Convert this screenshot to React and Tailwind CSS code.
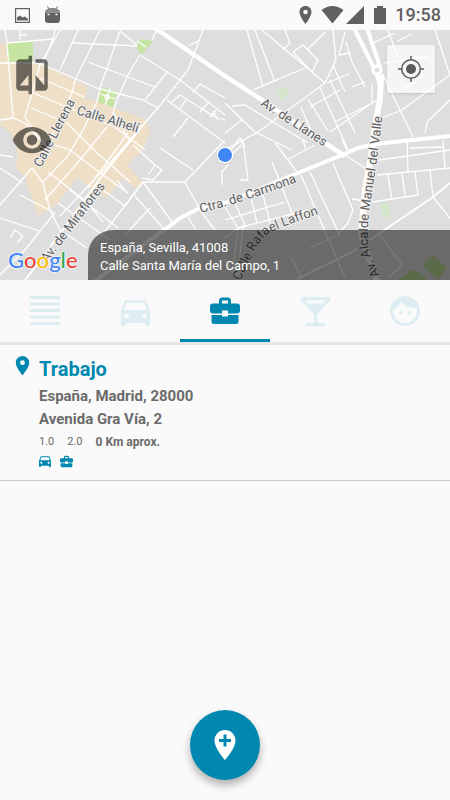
import {
  MdAddLocation,
  MdCompare,
  MdDirectionsCar,
  MdFace,
  MdLocalBar,
  MdPlace,
  MdVisibility,
} from "react-icons/md";

const MINOR_ROADS = [
  "M5 30L7 43L13 118L0 120M7 43L53 39M20 30V40M20 35H27M0 63H33",
  "M60 30L40 65L25 117L40 140M55 30L53 39L43 63M78 30L60 70M100 30L75 80L72 93L47 146",
  "M120 31L100 88L97 102M73 43L137 46M120 31L137 45M157 30L152 40M137 41L146 47",
  "M140 55L128 75L117 100L110 122M140 55L180 80L225 115M88 62L155 87",
  "M33 62L48 67L97 88L143 100L158 108M167 72L145 100M203 30L188 70L158 108L107 166L60 216",
  "M200 40L188 46M167 100L225 143M172 102L180 95L215 117L225 120M193 92L200 84L225 98",
  "M188 118L173 137M200 112L208 103M180 108L186 100M210 117L216 110M213 111L218 120",
  "M40 78L84 97M33 93L115 127L145 150M31 108L67 123L94 150L130 182M13 118L25 123L50 150",
  "M40 140L70 150L110 180L128 193M48 172L87 202L103 222M113 112L130 142",
  "M97 102L83 130L67 157L43 182M107 127L80 160L45 200M128 133L88 188",
  "M0 168L23 183M0 155L13 157M20 195L55 213M32 168L43 183L50 210L60 230L87 248M55 213L40 231L25 250L0 275M0 218L40 231M32 168L0 205",
  "M58 203L110 240M70 190L118 228M100 188L125 206L143 182M117 180L127 193",
  "M143 182H185L225 140M185 182L200 210M143 182L172 222M135 196L163 228M143 182L110 225L96 242",
  "M148 175L155 165L162 170L153 180L142 178M160 148L193 170M133 145L155 165M125 235L150 208M10 238L15 230L23 236L17 243",
  "M247 30L263 87M255 30L275 82M262 30L325 83M285 30L290 43L283 50M325 32L308 49M293 52L303 45L318 60L312 72L293 52",
  "M333 30L336 60L325 83L258 132L225 150M253 90L305 68M333 65L345 92M345 32L339 55L350 53M346 42L352 62L365 87",
  "M320 88L348 150M330 80L355 133M301 107L314 138M308 99L328 131M335 122L382 98M327 83L349 74M310 107L340 90M352 87L365 82M372 85V103L330 132",
  "M385 63L428 56M382 73L413 137M450 75L402 110L382 118M435 30L450 75M425 133L427 122L450 100M373 43L395 33M388 30L398 58M398 41L412 34M402 90L424 75",
  "M225 103L255 132L292 150M232 106L245 105L308 143M225 133L242 120M231 150L240 138L245 148",
  "M243 140L248 180H240M242 145L225 160M272 162L292 213M275 143L297 172M287 160L315 145M303 140L306 150",
  "M301 175L345 278M310 172L340 236M333 163L353 210L348 223L337 235L310 248M345 155L365 168M342 140L347 150",
  "M407 140L408 172M450 150L379 160M377 175L450 168M388 175L392 200M402 173L405 197M415 172L418 195L372 202L352 199M430 170L433 197L450 218M409 148L443 147M443 140L445 168",
  "M380 235L402 265L388 278M225 220L285 202M232 197L245 225M250 193L257 223M262 190L270 223M225 207L238 228L308 210M238 228L232 275M243 225L238 275M291 257L302 278",
  "M225 238L238 228M225 260L240 280M222 185V172L228 165M200 210L215 230M188 217L196 230",
];

const TABS = [
  { label: "Todos", icon: ListIcon, size: 30 },
  { label: "Coche", icon: MdDirectionsCar, size: 39 },
  { label: "Trabajo", icon: BriefcaseIcon, size: 30, active: true },
  { label: "Ocio", icon: MdLocalBar, size: 39 },
  { label: "Personas", icon: MdFace, size: 36 },
];

function ListIcon({ size }) {
  return (
    <svg width={size} height={size} viewBox="0 0 30 30" fill="currentColor" aria-hidden="true">
      <path d="M0 0H30V3H0ZM0 6.500H30V9.500H0ZM0 13H30V16H0ZM0 19.500H30V22.500H0ZM0 26H30V29H0Z" />
    </svg>
  );
}

function BriefcaseIcon({ size }) {
  return (
    <svg width={size} height={size} viewBox="0 0 30 30" fill="currentColor" aria-hidden="true">
      <path
        fillRule="evenodd"
        d="M9 7.500V5Q9 1.500 12.500 1.500H17.500Q21 1.500 21 5V7.500H27Q30 7.500 30 10.500V14.500Q30 17.500 27 17.500H18V14.500H12V17.500H3Q0 17.500 0 14.500V10.500Q0 7.500 3 7.500ZM12 7.500H18V4.500H12Z"
      />
      <path d="M1.500 19H12V20.500H18V19H28.500V25.500Q28.500 28 26 28H4Q1.500 28 1.500 25.500Z" />
    </svg>
  );
}

function StatusBar() {
  return (
    <header className="flex h-[30px] items-center bg-[#fafafa] px-[15px] text-[#616161]">
      <svg width="15" height="15" viewBox="0 0 15 15" aria-hidden="true">
        <rect x=".6" y=".6" width="13.8" height="13.8" fill="none" stroke="currentColor" strokeWidth="1.2" />
        <path d="M2 12.500V9.500L5 7.500L7.500 9.500L10 8.500L13 11V12.500Z" fill="currentColor" />
      </svg>
      <svg className="ml-[15px]" width="15" height="18" viewBox="0 0 15 18" fill="none" aria-hidden="true">
        <path d="M2.500 .5L4 3M12.500 .5L11 3" stroke="currentColor" />
        <path d="M0 6.500C0 3.500 3 2 7.500 2S15 3.500 15 6.500Z" fill="#8a8a8a" />
        <path d="M0 6.500H15V14Q15 17 12 17H3Q0 17 0 14Z" fill="currentColor" />
        <path d="M2.500 8.500H4.500M10.500 8.500H12.500" stroke="white" strokeWidth="1.600" />
      </svg>
      <div className="ml-auto flex items-center">
        <svg width="87" height="20" viewBox="0 0 87 20" fill="currentColor" aria-hidden="true">
          <path
            fillRule="evenodd"
            d="M6.500 1C3 1 .5 3.600 .5 7C.5 11.500 6.500 19 6.500 19S12.500 11.500 12.500 7C12.500 3.600 10 1 6.500 1ZM6.500 4.700A2.300 2.300 0 1 1 6.500 9.300A2.300 2.300 0 1 1 6.500 4.700Z"
          />
          <path d="M22.500 5Q33.500 -3 44.500 5L33.500 18.500ZM65 1V19H47ZM75 3H78V1H84V3H87V19H75Z" />
        </svg>
        <time className="-mr-1.5 ml-[9px] text-[18px] leading-[30px] font-medium">19:58</time>
      </div>
    </header>
  );
}

function StreetMap() {
  return (
    <svg
      className="absolute inset-0 h-full w-full"
      viewBox="0 30 450 250"
      preserveAspectRatio="xMidYMid slice"
      role="img"
      aria-label="Mapa de Sevilla"
    >
      <rect x="-10" y="20" width="470" height="270" fill="#dedede" />
      <path
        d="M0 44L6 43L8 62L43 64L88 87L85 98L114 108L146 120L150 132L142 150L127 165L143 182L135 188L122 178L107 198L77 178L58 203L38 216L25 177L16 168L18 153L10 132L0 125Z"
        fill="#efdfc6"
      />
      <path d="M6 43L33 41V62H8ZM102 87L117 92L113 107L97 102ZM137 46Q138 40 143 39L153 41L142 54Q137 52 137 46Z" fill="#c6e5a2" />
      <path d="M276 93L283 86L290 92L282 100ZM381 203H389L390 218L382 217Z" fill="#d5e5cb" />
      <path d="M422 265L432 255L447 268L438 280ZM398 280L412 269L427 278V281Z" fill="#bfe09a" />
      <g fill="none" stroke="white" strokeLinejoin="round">
        <g strokeWidth="1.300">
          {MINOR_ROADS.map((d) => (
            <path key={d} d={d} />
          ))}
          <path d="M100 94L115 99M110 89L105 105" />
          <circle cx="107" cy="97" r="2" />
        </g>
        <path d="M143 125L105 172L43 257L25 280M450 183L433 197L352 252L297 279" strokeWidth="2" />
        <path d="M95 281L150 240L167 228L180 218L200 208L225 203L293 175L342 155L358 148L375 144L450 136" strokeWidth="4" />
        <path d="M155 28L225 76L262 100L325 143L345 156" strokeWidth="4.500" />
        <path d="M354 28L375 70L381 88M367 28L380 67" strokeWidth="4" />
        <path d="M381 75L380 100L376 120L372 150L365 190L361 235L377 281" strokeWidth="6" />
        <circle cx="377" cy="70" r="4" strokeWidth="3" fill="#dedede" />
      </g>
      <defs>
        <path id="llerena" d="M41 168L74 104" />
        <path id="alheli" d="M76 114L145 135" />
        <path id="miraflores" d="M47 263L108 183" />
        <path id="llanes" d="M260 105L335 154" />
        <path id="carmona" d="M201 213Q245 202 305 179" />
        <path id="laffon" d="M240 281L251 258Q257 242 269 233Q280 227 325 212" />
        <path id="valle" d="M380 275L371 257Q367 248 368 230L369 212L377 160L384 105" />
      </defs>
      <g
        className="font-['Roboto',sans-serif] text-[13px]"
        fill="#5f5f5f"
        stroke="#f1f1f1"
        strokeWidth="2"
        strokeLinejoin="round"
        paintOrder="stroke"
      >
        <text><textPath href="#llerena">Calle Llerena</textPath></text>
        <text><textPath href="#alheli">Calle Alhelí</textPath></text>
        <text><textPath href="#miraflores">Av. de Miraflores</textPath></text>
        <text><textPath href="#llanes">Av. de Llanes</textPath></text>
        <text><textPath href="#carmona">Ctra. de Carmona</textPath></text>
        <text><textPath href="#laffon">Calle Rafael Laffon</textPath></text>
        <text><textPath href="#valle">Av. Alcalde Manuel del Valle</textPath></text>
      </g>
      <circle cx="225" cy="155.500" r="9" fill="#bdbdbd" opacity=".5" />
      <circle cx="225" cy="155" r="8.500" fill="white" />
      <circle cx="225" cy="155" r="7" fill="#4285f4" />
    </svg>
  );
}

function GoogleLogo() {
  return (
    <div className="flex font-[Lato,sans-serif] text-[22px] leading-8 font-medium [text-shadow:0_0_1px_#fff,0_0_2px_#fff,0_0_2px_#fff]">
      <span className="text-[#4285f4]">G</span>
      <span className="text-[#ea4335]">o</span>
      <span className="text-[#fbbc05]">o</span>
      <span className="text-[#4285f4]">g</span>
      <span className="text-[#34a853]">l</span>
      <span className="text-[#ea4335]">e</span>
    </div>
  );
}

function MapPanel() {
  return (
    <section className="relative h-[250px] overflow-hidden">
      <StreetMap />
      <div className="absolute inset-x-0 top-0 flex items-start justify-between px-[15px] pt-[15px]">
        <div className="-ml-1 flex flex-col gap-[23px] pt-[9px] text-black/55">
          <button type="button" aria-label="Comparar">
            <MdCompare size={42} />
          </button>
          <button type="button" aria-label="Mostrar">
            <MdVisibility size={42} />
          </button>
        </div>
        <button
          type="button"
          aria-label="Mi ubicación"
          className="flex size-12 items-center justify-center rounded-xs bg-white/70 text-[#5c5c5c] shadow-sm"
        >
          <svg width="26" height="26" viewBox="0 0 26 26" fill="none" stroke="currentColor" strokeWidth="1.500" aria-hidden="true">
            <circle cx="13" cy="13" r="9.300" />
            <circle cx="13" cy="13" r="5" fill="currentColor" stroke="none" />
            <path d="M13 0V4M13 22V26M0 13H4M22 13H26" />
          </svg>
        </button>
      </div>
      <div className="absolute inset-x-0 bottom-0 flex items-end">
        <div className="w-[88px] pb-1 pl-2">
          <GoogleLogo />
        </div>
        <address className="flex-1 rounded-tl-[25px] bg-black/52 pt-[9px] pb-[5px] pl-3 text-[13px] leading-[18px] text-white not-italic">
          España, Sevilla, 41008
          <br />
          Calle Santa María del Campo, 1
        </address>
      </div>
    </section>
  );
}

function CategoryTabs() {
  return (
    <nav className="grid grid-cols-5 border-b-[3px] border-[#e6e6e6]">
      {TABS.map(({ label, icon: Icon, size, active }) => (
        <button
          key={label}
          type="button"
          aria-label={label}
          aria-pressed={Boolean(active)}
          className={
            active
              ? "flex h-[62px] items-center justify-center border-b-[3px] border-[#0088b0] pt-[3px] text-[#0088b0]"
              : "flex h-[62px] items-center justify-center border-b-[3px] border-transparent pt-[3px] text-[#deedf2]"
          }
        >
          <Icon size={size} />
        </button>
      ))}
    </nav>
  );
}

function PlaceItem() {
  return (
    <li className="flex gap-[5px] border-b border-[#c8c8c8] pt-[9px] pr-4 pb-[11px] pl-[11px] text-[#6b6b6b]">
      <MdPlace size={23} className="shrink-0 text-[#0088b0]" />
      <div>
        <h2 className="text-[20px] leading-[31px] font-bold text-[#0088b0]">Trabajo</h2>
        <p className="text-[15px] leading-[23px] font-bold">
          España, Madrid, 28000
          <br />
          Avenida Gra Vía, 2
        </p>
        <p className="flex gap-[13px] text-[12px] leading-[22px]">
          <span className="text-[11px]">1.0</span>
          <span className="text-[11px]">2.0</span>
          <span className="font-bold">0 Km aprox.</span>
        </p>
        <div className="-ml-0.5 flex gap-[5px] text-[#0088b0]">
          <MdDirectionsCar size={16} />
          <span className="flex size-4 items-center justify-center">
            <BriefcaseIcon size={13} />
          </span>
        </div>
      </div>
    </li>
  );
}

export default function App() {
  return (
    <div className="min-h-screen bg-[#fafafa] font-['Roboto',sans-serif]">
      <StatusBar />
      <main>
        <MapPanel />
        <CategoryTabs />
        <ul>
          <PlaceItem />
        </ul>
      </main>
      <button
        type="button"
        aria-label="Añadir lugar"
        className="fixed bottom-5 left-1/2 flex size-[70px] -translate-x-1/2 items-center justify-center rounded-full bg-[#0088b0] text-white shadow-[0_5px_9px_rgba(0,0,0,0.3)]"
      >
        <MdAddLocation size={36} />
      </button>
    </div>
  );
}
